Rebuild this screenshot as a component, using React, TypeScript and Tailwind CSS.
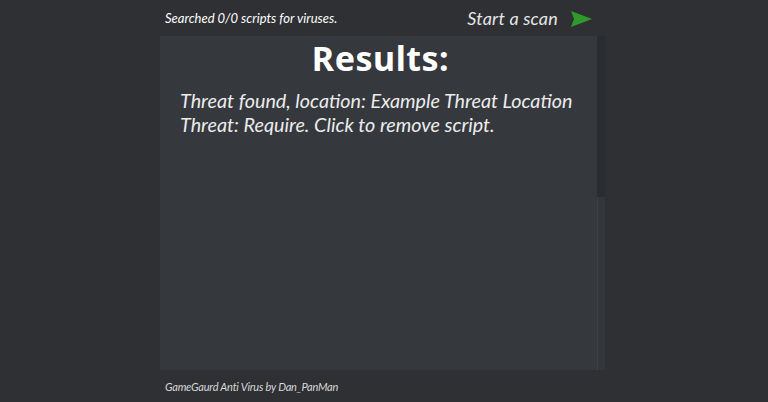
export default function App() {
  return (
    <div className="w-[768px] h-[402px] bg-[#2e3034] flex flex-col overflow-hidden" style={{ fontFamily: '"Lato", "Open Sans", sans-serif' }}>
      {/* Top bar */}
      <div className="h-[36px] flex items-center pl-[165px] pr-[176px]">
        <span className="text-[13px] italic text-white tracking-[0px] mt-[1px]">Searched 0/0 scripts for viruses.</span>
        <div className="ml-auto flex items-center gap-[13px]">
          <span className="text-[18px] italic text-[#e6e6e6] tracking-[0.2px]">Start a scan</span>
          <svg width="21" height="16" viewBox="0 0 21 16" className="mt-[1px]">
            <polygon points="0,0 21,8 0,16 3,8" fill="#2f9a2c" />
          </svg>
        </div>
      </div>

      {/* Results panel */}
      <div className="ml-[160px] w-[445px] h-[334px] flex bg-[#2b2d31]">
        <div className="flex-1 bg-[#35383d] flex flex-col">
          <h1 className="text-center text-[34px] font-bold text-white leading-none mt-[5px] pl-[4px] tracking-[0.5px]" style={{ fontFamily: '"Noto Sans", sans-serif' }}>
            Results:
          </h1>
          <div className="mt-[14px] pl-[20px] text-[19.75px] italic text-[#ececec] leading-[24px]">
            <p>Threat found, location: Example Threat Location</p>
            <p>Threat: Require. Click to remove script.</p>
          </div>
        </div>
        <div className="w-[8px] flex flex-col">
          <div className="h-[161px] bg-[#2a2c30]" />
          <div className="flex-1 bg-[#33363b] border-l border-[#3d4045]" />
        </div>
      </div>

      {/* Footer */}
      <div className="flex-1 flex items-center pl-[165px]">
        <span className="text-[11px] italic text-[#d8d8d8] tracking-[-0.2px] mt-[2px]">GameGaurd Anti Virus by Dan_PanMan</span>
      </div>
    </div>
  );
}
